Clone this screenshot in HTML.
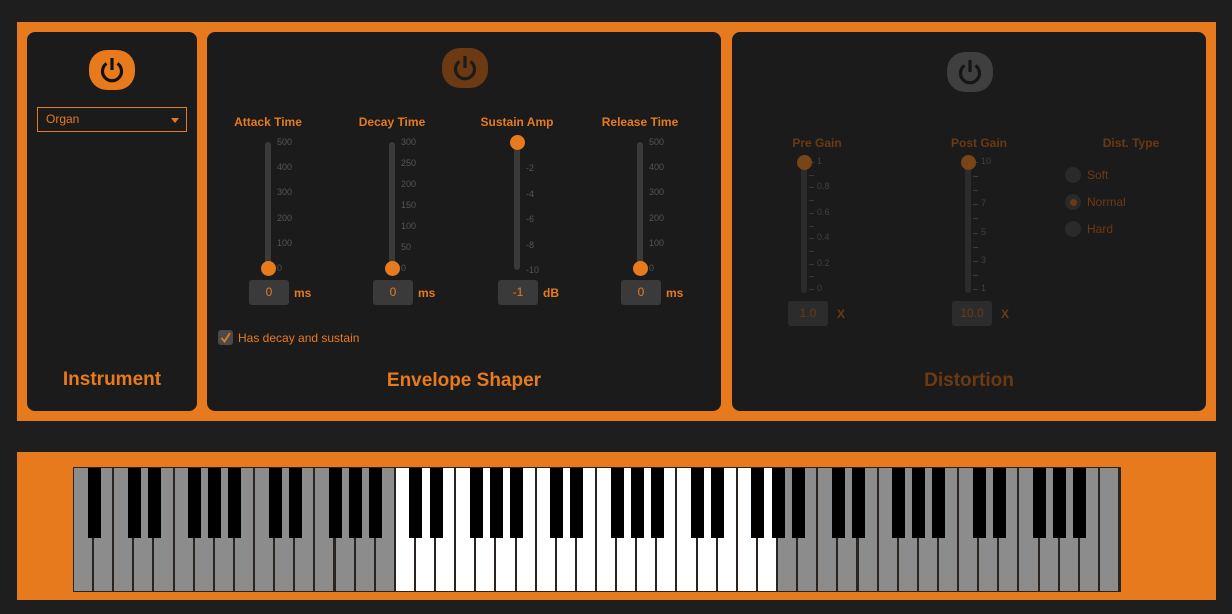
<!DOCTYPE html>
<html><head><meta charset="utf-8"><style>
body{margin:0;width:1232px;height:614px;background:#1e1e1e;position:relative;overflow:hidden;font-family:"Liberation Sans",sans-serif}
.a{position:absolute}
.panel{position:absolute;background:#1b1b1b;border-radius:8px}
.lbl{position:absolute;font-size:12px;font-weight:bold;color:#e87a1e;text-align:center;width:100px}
.track{position:absolute;width:6px;border-radius:3px;background:#3a3a3a}
.thumb{position:absolute;width:15px;height:15px;border-radius:50%;background:#e87a1e}
.tk{position:absolute;font-size:9px;color:#555}
.box{position:absolute;width:40px;height:25px;background:#3a3a3a;border-radius:3px;color:#e87a1e;font-size:12px;text-align:center;line-height:25px}
.unit{position:absolute;font-size:12px;font-weight:bold;color:#e87a1e}
.title{position:absolute;font-size:19px;font-weight:bold;color:#e87a1e;text-align:center}
.d{color:#6a3a14}
.tick{position:absolute;width:5px;height:1px;background:#3a3a3a}
.rad{position:absolute;width:16px;height:16px;border-radius:50%;background:#2a2a2a}
.rt{position:absolute;font-size:12px;color:#6a3a14}
</style></head><body>
<div class="a" style="left:17px;top:22px;width:1199px;height:399px;background:#e87a1e"></div>
<div class="panel" style="left:27px;top:32px;width:170px;height:379px"></div>
<div class="panel" style="left:207px;top:32px;width:514px;height:379px"></div>
<div class="panel" style="left:732px;top:32px;width:474px;height:379px"></div>

<svg class="a" style="left:89px;top:50px" width="46" height="40"><rect width="46" height="40" rx="18" fill="#e87a1e"/><path d="M17.5 13.5A9.5 9.5 0 1 0 28.5 13.5" fill="none" stroke="#111" stroke-width="3.2"/><line x1="23" y1="8" x2="23" y2="20" stroke="#111" stroke-width="3.2"/></svg>
<svg class="a" style="left:442px;top:48px" width="46" height="40"><rect width="46" height="40" rx="18" fill="#6b3a12"/><path d="M17.5 13.5A9.5 9.5 0 1 0 28.5 13.5" fill="none" stroke="#1b1b1b" stroke-width="3.2"/><line x1="23" y1="8" x2="23" y2="20" stroke="#1b1b1b" stroke-width="3.2"/></svg>
<svg class="a" style="left:947px;top:52px" width="46" height="40"><rect width="46" height="40" rx="18" fill="#3f3f3f"/><path d="M17.5 13.5A9.5 9.5 0 1 0 28.5 13.5" fill="none" stroke="#151515" stroke-width="3.2"/><line x1="23" y1="8" x2="23" y2="20" stroke="#151515" stroke-width="3.2"/></svg>

<div class="a" style="left:37px;top:107px;height:23px;border:1px solid #e87a1e;color:#e87a1e;font-size:12px;line-height:23px;padding-left:8px;width:140px"><span>Organ</span></div>
<div class="a" style="left:171px;top:118px;width:0;height:0;border-left:4px solid transparent;border-right:4px solid transparent;border-top:5px solid #e87a1e"></div>
<div class="title" style="left:27px;top:369px;width:170px">Instrument</div>

<div id="env"></div>
<div class="a" style="left:218px;top:330px;width:15px;height:15px;background:#4a4a4a;border-radius:3px"></div>
<svg class="a" style="left:218px;top:330px" width="15" height="15"><path d="M3.5 8L6.5 11.5L12 3" fill="none" stroke="#e87a1e" stroke-width="1.8"/></svg>
<div class="a" style="left:238px;top:331px;font-size:12px;color:#e87a1e">Has decay and sustain</div>
<div class="title" style="left:207px;top:370px;width:514px">Envelope Shaper</div>

<div id="dist"></div>
<div class="lbl d" style="left:767px;top:136px">Pre Gain</div>
<div class="lbl d" style="left:929px;top:136px">Post Gain</div>
<div class="lbl d" style="left:1081px;top:136px">Dist. Type</div>
<div class="rad" style="left:1065px;top:167px"></div><div class="rt" style="left:1087px;top:168px">Soft</div>
<div class="rad" style="left:1065px;top:194px"></div><div class="a" style="left:1070px;top:199px;width:7px;height:7px;border-radius:50%;background:#6a3a14"></div><div class="rt" style="left:1087px;top:195px">Normal</div>
<div class="rad" style="left:1065px;top:221px"></div><div class="rt" style="left:1087px;top:222px">Hard</div>
<div class="title d" style="left:732px;top:370px;width:474px">Distortion</div>

<div class="a" style="left:17px;top:452px;width:1199px;height:148px;background:#e87a1e"></div>
<div id="kb" class="a" style="left:73px;top:467px;width:1048px;height:125px;background:#2a2420"></div>

<script>
var env=document.getElementById('env'),h='';
function slider(x,name,labels,ty,by,thumbY,val,unit){
 h+='<div class="lbl" style="left:'+(x-50)+'px;top:115px">'+name+'</div>';
 h+='<div class="track" style="left:'+(x-3)+'px;top:'+ty+'px;height:'+(by-ty)+'px"></div>';
 for(var i=0;i<labels.length;i++){var y=ty+(by-ty)*i/(labels.length-1);h+='<div class="tk" style="left:'+(x+9)+'px;top:'+(y-5)+'px">'+labels[i]+'</div>';}
 h+='<div class="thumb" style="left:'+(x-7.5)+'px;top:'+(thumbY-7.5)+'px"></div>';
 h+='<div class="box" style="left:'+(x-19)+'px;top:280px">'+val+'</div>';
 h+='<div class="unit" style="left:'+(x+26)+'px;top:286px">'+unit+'</div>';
}
slider(268,'Attack Time',['500','400','300','200','100','0'],142,268,268,'0','ms');
slider(392,'Decay Time',['300','250','200','150','100','50','0'],142,268,268,'0','ms');
slider(517,'Sustain Amp',['','-2','-4','-6','-8','-10'],143,270,142,'-1','dB');
slider(640,'Release Time',['500','400','300','200','100','0'],142,268,268,'0','ms');
env.innerHTML=h;
h='';
function ds(x,labs,val){
 h+='<div class="track" style="left:'+(x-3)+'px;top:160px;height:133px;background:#2c2c2c"></div>';
 var n=labs.length;for(var i=0;i<n;i++){var y=162+127*i/(n-1);h+='<div class="tick" style="left:'+(x+5)+'px;top:'+y+'px"></div>';if(labs[i])h+='<div class="tk" style="color:#404040;left:'+(x+13)+'px;top:'+(y-6)+'px">'+labs[i]+'</div>';}
 h+='<div class="thumb" style="background:#7a4515;left:'+(x-7.5)+'px;top:155px"></div>';
 h+='<div class="box" style="background:#2c2c2c;color:#6a3a14;left:'+(x-16)+'px;top:301px">'+val+'</div>';
 h+='<div class="unit" style="color:#6a3a14;left:'+(x+33)+'px;top:307px">X</div>';
}
ds(804,['1','','0.8','','0.6','','0.4','','0.2','','0'],'1.0');
ds(968,['10','','','7','','5','','3','','1'],'10.0');
document.getElementById('dist').innerHTML=h;
var kb=document.getElementById('kb');h='';
var W=1046/52,names='ABCDEFG';
for(var i=0;i<52;i++){var c=(i>=16&&i<=34)?'#fff':'#8c8c8c';h+='<div class="a" style="left:'+(1+i*W)+'px;top:1px;width:'+(W-2)+'px;height:123px;background:'+c+'"></div>';}
for(var i=0;i<51;i++){var n=names[i%7];if(n=='B'||n=='E')continue;var bx=1+(i+1)*W;h+='<div class="a" style="left:'+(bx-6.5)+'px;top:1px;width:13px;height:70px;background:#000"></div>';}
kb.innerHTML=h;
</script>
</body></html>
